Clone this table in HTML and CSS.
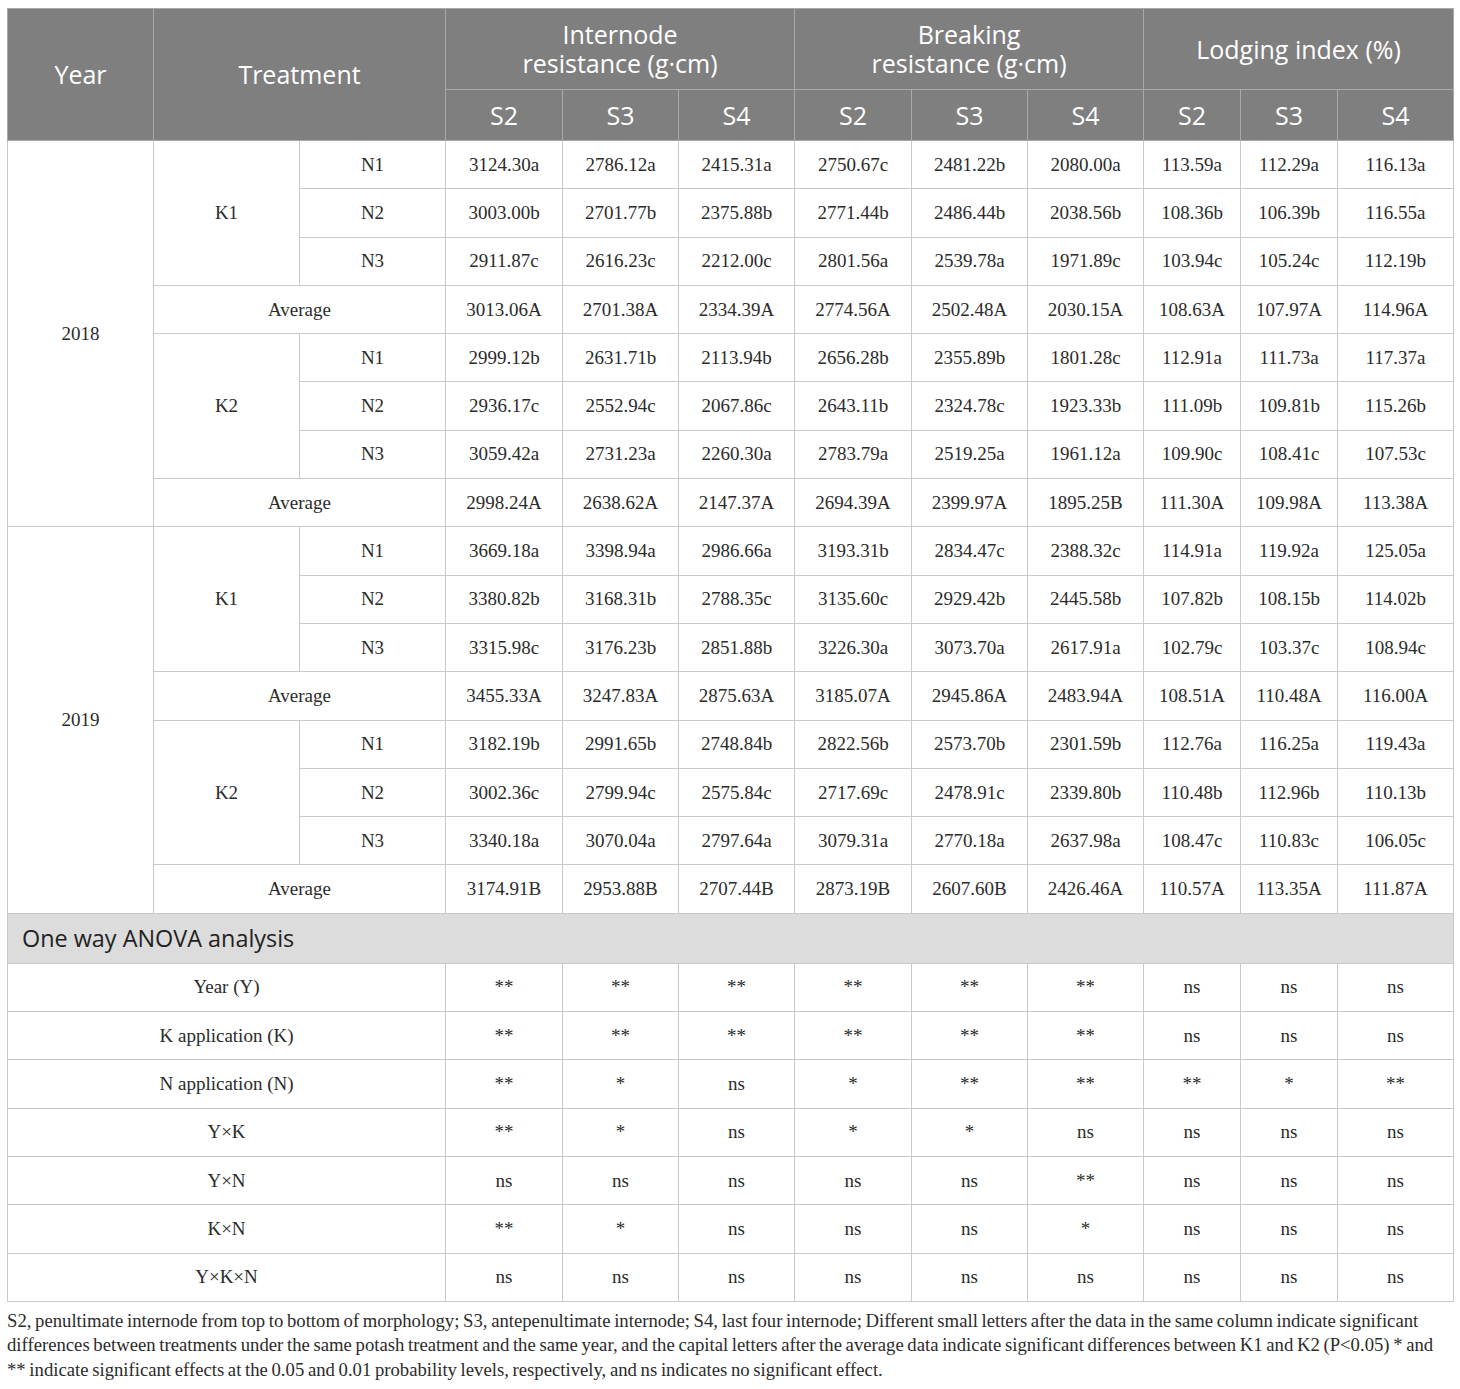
FILE: index.html
```html
<!DOCTYPE html>
<html>
<head>
<meta charset="utf-8">
<link rel="stylesheet" href="styles.css">
</head>
<body>
<table class="tbl">
<colgroup>
<col style="width:146px"><col style="width:146px"><col style="width:146px">
<col style="width:117px"><col style="width:116px"><col style="width:116px">
<col style="width:117px"><col style="width:116px"><col style="width:116px">
<col style="width:97px"><col style="width:97px"><col style="width:116px">
</colgroup>
<thead>
<tr class="h1">
<th rowspan="2">Year</th>
<th rowspan="2" colspan="2">Treatment</th>
<th colspan="3"><span class="hl">Internode</span><span class="hl">resistance (g·cm)</span></th>
<th colspan="3"><span class="hl">Breaking</span><span class="hl">resistance (g·cm)</span></th>
<th colspan="3">Lodging index (%)</th>
</tr>
<tr class="h2">
<th>S2</th><th>S3</th><th>S4</th>
<th>S2</th><th>S3</th><th>S4</th>
<th>S2</th><th>S3</th><th>S4</th>
</tr>
</thead>
<tbody>
<tr><td rowspan="8">2018</td><td rowspan="3">K1</td><td>N1</td><td>3124.30a</td><td>2786.12a</td><td>2415.31a</td><td>2750.67c</td><td>2481.22b</td><td>2080.00a</td><td>113.59a</td><td>112.29a</td><td>116.13a</td></tr>
<tr><td>N2</td><td>3003.00b</td><td>2701.77b</td><td>2375.88b</td><td>2771.44b</td><td>2486.44b</td><td>2038.56b</td><td>108.36b</td><td>106.39b</td><td>116.55a</td></tr>
<tr><td>N3</td><td>2911.87c</td><td>2616.23c</td><td>2212.00c</td><td>2801.56a</td><td>2539.78a</td><td>1971.89c</td><td>103.94c</td><td>105.24c</td><td>112.19b</td></tr>
<tr><td colspan="2">Average</td><td>3013.06A</td><td>2701.38A</td><td>2334.39A</td><td>2774.56A</td><td>2502.48A</td><td>2030.15A</td><td>108.63A</td><td>107.97A</td><td>114.96A</td></tr>
<tr><td rowspan="3">K2</td><td>N1</td><td>2999.12b</td><td>2631.71b</td><td>2113.94b</td><td>2656.28b</td><td>2355.89b</td><td>1801.28c</td><td>112.91a</td><td>111.73a</td><td>117.37a</td></tr>
<tr><td>N2</td><td>2936.17c</td><td>2552.94c</td><td>2067.86c</td><td>2643.11b</td><td>2324.78c</td><td>1923.33b</td><td>111.09b</td><td>109.81b</td><td>115.26b</td></tr>
<tr><td>N3</td><td>3059.42a</td><td>2731.23a</td><td>2260.30a</td><td>2783.79a</td><td>2519.25a</td><td>1961.12a</td><td>109.90c</td><td>108.41c</td><td>107.53c</td></tr>
<tr><td colspan="2">Average</td><td>2998.24A</td><td>2638.62A</td><td>2147.37A</td><td>2694.39A</td><td>2399.97A</td><td>1895.25B</td><td>111.30A</td><td>109.98A</td><td>113.38A</td></tr>
<tr><td rowspan="8">2019</td><td rowspan="3">K1</td><td>N1</td><td>3669.18a</td><td>3398.94a</td><td>2986.66a</td><td>3193.31b</td><td>2834.47c</td><td>2388.32c</td><td>114.91a</td><td>119.92a</td><td>125.05a</td></tr>
<tr><td>N2</td><td>3380.82b</td><td>3168.31b</td><td>2788.35c</td><td>3135.60c</td><td>2929.42b</td><td>2445.58b</td><td>107.82b</td><td>108.15b</td><td>114.02b</td></tr>
<tr><td>N3</td><td>3315.98c</td><td>3176.23b</td><td>2851.88b</td><td>3226.30a</td><td>3073.70a</td><td>2617.91a</td><td>102.79c</td><td>103.37c</td><td>108.94c</td></tr>
<tr><td colspan="2">Average</td><td>3455.33A</td><td>3247.83A</td><td>2875.63A</td><td>3185.07A</td><td>2945.86A</td><td>2483.94A</td><td>108.51A</td><td>110.48A</td><td>116.00A</td></tr>
<tr><td rowspan="3">K2</td><td>N1</td><td>3182.19b</td><td>2991.65b</td><td>2748.84b</td><td>2822.56b</td><td>2573.70b</td><td>2301.59b</td><td>112.76a</td><td>116.25a</td><td>119.43a</td></tr>
<tr><td>N2</td><td>3002.36c</td><td>2799.94c</td><td>2575.84c</td><td>2717.69c</td><td>2478.91c</td><td>2339.80b</td><td>110.48b</td><td>112.96b</td><td>110.13b</td></tr>
<tr><td>N3</td><td>3340.18a</td><td>3070.04a</td><td>2797.64a</td><td>3079.31a</td><td>2770.18a</td><td>2637.98a</td><td>108.47c</td><td>110.83c</td><td>106.05c</td></tr>
<tr><td colspan="2">Average</td><td>3174.91B</td><td>2953.88B</td><td>2707.44B</td><td>2873.19B</td><td>2607.60B</td><td>2426.46A</td><td>110.57A</td><td>113.35A</td><td>111.87A</td></tr>
<tr class="band"><td colspan="12">One way ANOVA analysis</td></tr>
<tr><td colspan="3">Year (Y)</td><td>**</td><td>**</td><td>**</td><td>**</td><td>**</td><td>**</td><td>ns</td><td>ns</td><td>ns</td></tr>
<tr><td colspan="3">K application (K)</td><td>**</td><td>**</td><td>**</td><td>**</td><td>**</td><td>**</td><td>ns</td><td>ns</td><td>ns</td></tr>
<tr><td colspan="3">N application (N)</td><td>**</td><td>*</td><td>ns</td><td>*</td><td>**</td><td>**</td><td>**</td><td>*</td><td>**</td></tr>
<tr><td colspan="3">Y×K</td><td>**</td><td>*</td><td>ns</td><td>*</td><td>*</td><td>ns</td><td>ns</td><td>ns</td><td>ns</td></tr>
<tr><td colspan="3">Y×N</td><td>ns</td><td>ns</td><td>ns</td><td>ns</td><td>ns</td><td>**</td><td>ns</td><td>ns</td><td>ns</td></tr>
<tr><td colspan="3">K×N</td><td>**</td><td>*</td><td>ns</td><td>ns</td><td>ns</td><td>*</td><td>ns</td><td>ns</td><td>ns</td></tr>
<tr><td colspan="3">Y×K×N</td><td>ns</td><td>ns</td><td>ns</td><td>ns</td><td>ns</td><td>ns</td><td>ns</td><td>ns</td><td>ns</td></tr>
</tbody>
</table>
<p class="note">S2, penultimate internode from top to bottom of morphology; S3, antepenultimate internode; S4, last four internode; Different small letters after the data in the same column indicate significant differences between treatments under the same potash treatment and the same year, and the capital letters after the average data indicate significant differences between K1 and K2 (P&lt;0.05) * and ** indicate significant effects at the 0.05 and 0.01 probability levels, respectively, and ns indicates no significant effect.</p>
</body>
</html>
```

FILE: styles.css
```css
html, body {
  margin: 0;
  padding: 0;
  background: #ffffff;
}
body {
  padding: 8px 7px 0 7px;
}
.tbl {
  border-collapse: collapse;
  table-layout: fixed;
  width: 1446px;
  font-family: "Liberation Serif", "Times New Roman", serif;
  font-size: 19px;
  color: #2b2b2b;
}
.tbl th {
  background: #7f7f7f;
  color: #ffffff;
  font-family: "Open Sans", "Noto Sans", sans-serif;
  font-weight: 400;
  font-size: 25px;
  line-height: 29px;
  border: 1px solid #a9a9a9;
  padding: 0;
  text-align: center;
  vertical-align: middle;
}
.tbl th .hl {
  display: block;
  height: 29px;
  line-height: 29px;
}
.tbl tr.h1 th {
  height: 80px;
}
.tbl tr.h2 th {
  height: 50px;
}
.tbl td {
  border: 1px solid #c9c9c9;
  padding: 0;
  height: 47.3px;
  text-align: center;
  vertical-align: middle;
}
.tbl tr.band td {
  background: #dcdcdc;
  text-align: left;
  font-family: "Open Sans", "Noto Sans", sans-serif;
  font-size: 23.4px;
  color: #222222;
  padding-left: 14px;
  height: 49px;
}
.note {
  margin: 7px 0 0 0;
  width: 1446px;
  font-family: "Liberation Serif", "Times New Roman", serif;
  font-size: 18.7px;
  line-height: 24.5px;
  word-spacing: -1px;
  color: #2b2b2b;
}
```
